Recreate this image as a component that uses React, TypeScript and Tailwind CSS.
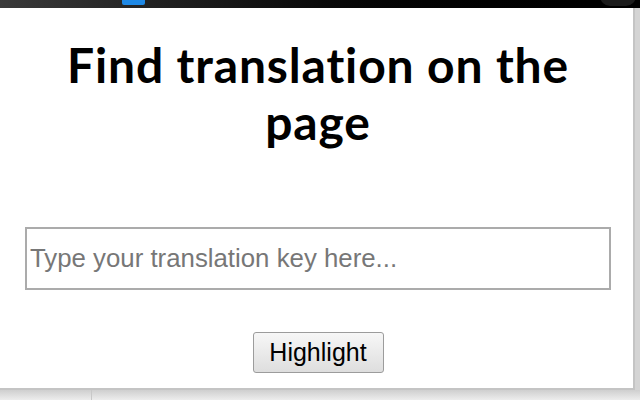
export default function App() {
  return (
    <div className="w-[640px] h-[400px] flex flex-col bg-[#e6e6e6] overflow-hidden">
      {/* browser toolbar edge */}
      <div className="relative h-[8px] shrink-0 bg-gradient-to-r from-[#3a3a3a] via-[#0a0a0a] to-black">
        <div className="absolute left-[122px] top-0 w-[23px] h-[5px] rounded-b-[2px] bg-[#1e88e5]" />
        <div className="absolute right-[4px] -top-[14px] w-[36px] h-[20px] rounded-full bg-[#1c1c1c]" />
      </div>

      <div className="flex h-[382px] shrink-0">
        <div className="w-[635px] h-full pl-[3px] bg-white border-r-2 border-b-2 border-[#c4c4c4] flex flex-col items-center">
          <h1 className="mt-[28px] text-center text-[48px] leading-[57px] font-bold text-black tracking-[0.85px] font-['Lato','Noto_Sans',sans-serif]">
            Find translation on the
            <br />
            page
          </h1>
          <input
            type="text"
            placeholder="Type your translation key here..."
            className="mt-[77px] w-[586px] h-[63px] border-2 border-[#ababab] px-[3px] text-[25.8px] text-black placeholder:text-[#777] outline-none font-['Liberation_Sans',Arial,sans-serif]"
          />
          <button className="mt-[42px] w-[131px] h-[41px] rounded-[3px] border border-[#9c9c9c] bg-gradient-to-b from-[#f7f7f7] to-[#dedede] text-[25px] text-black font-['Liberation_Sans',Arial,sans-serif]">
            Highlight
          </button>
        </div>
        <div className="flex-1 bg-[#d4d4d4]" />
      </div>

      <div className="flex flex-1 bg-gradient-to-b from-[#cfcfcf] to-[#ededed]">
        <div className="w-[92px] border-r border-[#c8c8c8]" />
      </div>
    </div>
  );
}
